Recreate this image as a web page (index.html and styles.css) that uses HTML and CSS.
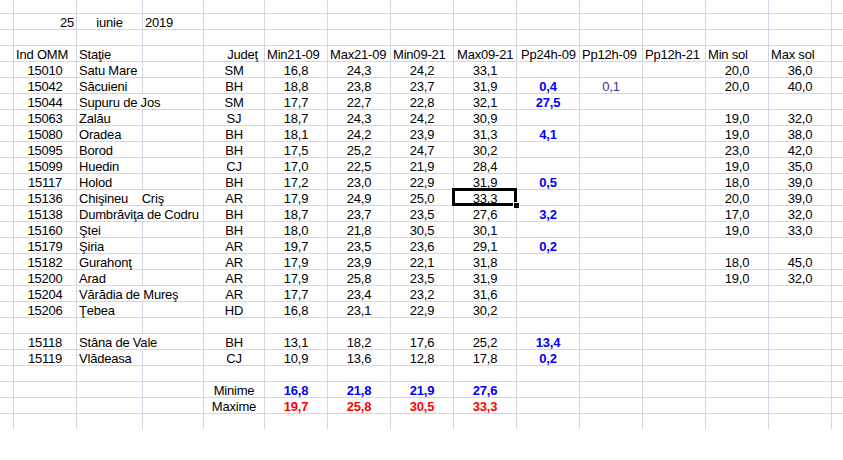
FILE: index.html
```html
<!DOCTYPE html>
<html lang="ro">
<head>
<meta charset="utf-8">
<title>25 iunie 2019</title>
<link rel="stylesheet" href="styles.css">
</head>
<body>
<div class="sheet">
  <div class="row top"><span></span><span></span><span></span><span></span><span></span><span></span><span></span><span></span><span></span><span></span><span></span><span></span><span></span><span></span><span></span></div>
  <div class="row"><span></span><span class="r">25</span><span>iunie</span><span class="l">2019</span><span></span><span></span><span></span><span></span><span></span><span></span><span></span><span></span><span></span><span></span><span></span></div>
  <div class="row"><span></span><span></span><span></span><span></span><span></span><span></span><span></span><span></span><span></span><span></span><span></span><span></span><span></span><span></span><span></span></div>
  <div class="row"><span></span><span class="l">Ind OMM</span><span class="l">Staţie</span><span></span><span class="jr">Judeţ</span><span class="l">Min21-09</span><span class="l">Max21-09</span><span class="l">Min09-21</span><span class="l p3">Max09-21</span><span class="l p4">Pp24h-09</span><span class="l">Pp12h-09</span><span class="l">Pp12h-21</span><span class="l">Min sol</span><span class="l">Max sol</span><span></span></div>
  <div class="row"><span></span><span>15010</span><span class="l">Satu Mare</span><span></span><span>SM</span><span>16,8</span><span>24,3</span><span>24,2</span><span>33,1</span><span></span><span></span><span></span><span>20,0</span><span>36,0</span><span></span></div>
  <div class="row"><span></span><span>15042</span><span class="l">Săcuieni</span><span></span><span>BH</span><span>18,8</span><span>23,8</span><span>23,7</span><span>31,9</span><span class="b">0,4</span><span class="pu">0,1</span><span></span><span>20,0</span><span>40,0</span><span></span></div>
  <div class="row"><span></span><span>15044</span><span class="l w2">Supuru de Jos</span><span>SM</span><span>17,7</span><span>22,7</span><span>22,8</span><span>32,1</span><span class="b">27,5</span><span></span><span></span><span></span><span></span><span></span></div>
  <div class="row"><span></span><span>15063</span><span class="l">Zalău</span><span></span><span>SJ</span><span>18,7</span><span>24,3</span><span>24,2</span><span>30,9</span><span></span><span></span><span></span><span>19,0</span><span>32,0</span><span></span></div>
  <div class="row"><span></span><span>15080</span><span class="l">Oradea</span><span></span><span>BH</span><span>18,1</span><span>24,2</span><span>23,9</span><span>31,3</span><span class="b">4,1</span><span></span><span></span><span>19,0</span><span>38,0</span><span></span></div>
  <div class="row"><span></span><span>15095</span><span class="l">Borod</span><span></span><span>BH</span><span>17,5</span><span>25,2</span><span>24,7</span><span>30,2</span><span></span><span></span><span></span><span>23,0</span><span>42,0</span><span></span></div>
  <div class="row"><span></span><span>15099</span><span class="l">Huedin</span><span></span><span>CJ</span><span>17,0</span><span>22,5</span><span>21,9</span><span>28,4</span><span></span><span></span><span></span><span>19,0</span><span>35,0</span><span></span></div>
  <div class="row"><span></span><span>15117</span><span class="l">Holod</span><span></span><span>BH</span><span>17,2</span><span>23,0</span><span>22,9</span><span>31,9</span><span class="b">0,5</span><span></span><span></span><span>18,0</span><span>39,0</span><span></span></div>
  <div class="row"><span></span><span>15136</span><span class="l w2">Chişineu    Criş</span><span>AR</span><span>17,9</span><span>24,9</span><span>25,0</span><span class="sel">33,3</span><span></span><span></span><span></span><span>20,0</span><span>39,0</span><span></span></div>
  <div class="row"><span></span><span>15138</span><span class="l w2">Dumbrăviţa de Codru</span><span>BH</span><span>18,7</span><span>23,7</span><span>23,5</span><span>27,6</span><span class="b">3,2</span><span></span><span></span><span>17,0</span><span>32,0</span><span></span></div>
  <div class="row"><span></span><span>15160</span><span class="l">Ştei</span><span></span><span>BH</span><span>18,0</span><span>21,8</span><span>30,5</span><span>30,1</span><span></span><span></span><span></span><span>19,0</span><span>33,0</span><span></span></div>
  <div class="row"><span></span><span>15179</span><span class="l">Şiria</span><span></span><span>AR</span><span>19,7</span><span>23,5</span><span>23,6</span><span>29,1</span><span class="b">0,2</span><span></span><span></span><span></span><span></span><span></span></div>
  <div class="row"><span></span><span>15182</span><span class="l">Gurahonţ</span><span></span><span>AR</span><span>17,9</span><span>23,9</span><span>22,1</span><span>31,8</span><span></span><span></span><span></span><span>18,0</span><span>45,0</span><span></span></div>
  <div class="row"><span></span><span>15200</span><span class="l">Arad</span><span></span><span>AR</span><span>17,9</span><span>25,8</span><span>23,5</span><span>31,9</span><span></span><span></span><span></span><span>19,0</span><span>32,0</span><span></span></div>
  <div class="row"><span></span><span>15204</span><span class="l w2">Vărădia de Mureş</span><span>AR</span><span>17,7</span><span>23,4</span><span>23,2</span><span>31,6</span><span></span><span></span><span></span><span></span><span></span><span></span></div>
  <div class="row"><span></span><span>15206</span><span class="l">Ţebea</span><span></span><span>HD</span><span>16,8</span><span>23,1</span><span>22,9</span><span>30,2</span><span></span><span></span><span></span><span></span><span></span><span></span></div>
  <div class="row"><span></span><span></span><span></span><span></span><span></span><span></span><span></span><span></span><span></span><span></span><span></span><span></span><span></span><span></span><span></span></div>
  <div class="row"><span></span><span>15118</span><span class="l w2">Stâna de Vale</span><span>BH</span><span>13,1</span><span>18,2</span><span>17,6</span><span>25,2</span><span class="b">13,4</span><span></span><span></span><span></span><span></span><span></span></div>
  <div class="row"><span></span><span>15119</span><span class="l">Vlădeasa</span><span></span><span>CJ</span><span>10,9</span><span>13,6</span><span>12,8</span><span>17,8</span><span class="b">0,2</span><span></span><span></span><span></span><span></span><span></span></div>
  <div class="row"><span></span><span></span><span></span><span></span><span></span><span></span><span></span><span></span><span></span><span></span><span></span><span></span><span></span><span></span><span></span></div>
  <div class="row"><span></span><span></span><span></span><span></span><span>Minime</span><span class="b">16,8</span><span class="b">21,8</span><span class="b">21,9</span><span class="b">27,6</span><span></span><span></span><span></span><span></span><span></span><span></span></div>
  <div class="row"><span></span><span></span><span></span><span></span><span>Maxime</span><span class="rd">19,7</span><span class="rd">25,8</span><span class="rd">30,5</span><span class="rd">33,3</span><span></span><span></span><span></span><span></span><span></span><span></span></div>
  <div class="row"><span></span><span></span><span></span><span></span><span></span><span></span><span></span><span></span><span></span><span></span><span></span><span></span><span></span><span></span><span></span></div>
</div>
</body>
</html>
```

FILE: styles.css
```css
html, body {
  margin: 0;
  background: #fff;
}

body {
  font: 13px "Liberation Sans", Arial, sans-serif;
  color: #000;
  letter-spacing: -0.2px;
}

.sheet {
  width: 843px;
  height: 429px;
  overflow: hidden;
}

.row {
  display: grid;
  grid-template-columns: 14px 63px 66px 61px 61px repeat(9, 63px) 63px;
  grid-template-rows: 100%;
  height: 16px;
}

.row.top {
  height: 14px;
}

.row > span {
  box-sizing: border-box;
  border-right: 1px solid #d0d7e5;
  border-bottom: 1px solid #d0d7e5;
  padding: 2px 2px 0;
  line-height: 13px;
  text-align: center;
  white-space: pre;
  overflow: visible;
}

.row > .l { text-align: left; }
.row > .r { text-align: right; }
.row > .jr { text-align: right; padding-right: 6px; }
.row > .p3 { padding-left: 3px; }
.row > .p4 { padding-left: 4px; }
.row > .w2 { grid-column: span 2; }

.b { color: #0000ff; font-weight: bold; }
.rd { color: #ff0000; font-weight: bold; }
.pu { color: #333399; }

.sel {
  position: relative;
}

.sel::before {
  content: "";
  position: absolute;
  left: -2px;
  top: -2px;
  right: -1px;
  bottom: -1px;
  border: 3px solid #000;
}

.sel::after {
  content: "";
  position: absolute;
  width: 5px;
  height: 5px;
  right: -3px;
  bottom: -3px;
  background: #000;
  box-shadow: 0 0 0 1px #fff;
}
```
